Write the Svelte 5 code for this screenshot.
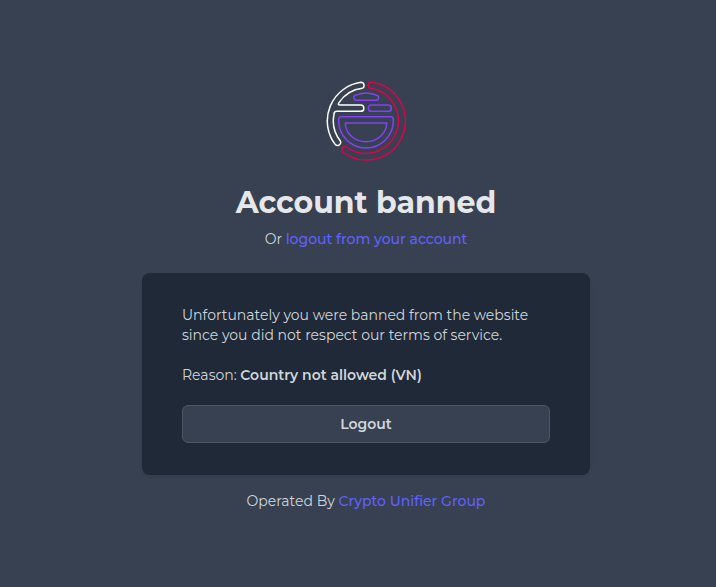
<script>
  const reason = 'Country not allowed (VN)';
</script>

<main>
  <header>
    <svg viewBox="0 0 240 240" role="img" aria-label="Crypto Unifier">
      <path class="white" d="M105 4A117 117 0 0 0 28 191A9.5 9.5 0 0 0 43 180A98 98 0 0 1 24 100Q24 91 32 91H104A9.5 9.5 0 0 0 104 72H42Q34 72 39 65A98 98 0 0 1 109 22A9.5 9.5 0 0 0 105 4Z" />
      <path class="red" d="M137 4A117 117 0 1 1 50 213A9.5 9.5 0 0 1 61 198A98 98 0 1 0 132 22A9.5 9.5 0 0 1 137 4Z" />
      <path class="purple" d="M91 58H151A8 8 0 0 0 155 44A84 84 0 0 0 86 44A8 8 0 0 0 91 58Z" />
      <rect class="purple" x="127" y="72" width="69" height="19" rx="9.5" />
      <path class="purple" d="M46 107H194Q202 107 202 115V119A82 82 0 0 1 38 119V115Q38 107 46 107Z" />
      <path class="purple" d="M58 126H182A62 56 0 0 1 58 126Z" />
    </svg>
    <h1>Account banned</h1>
    <p>Or <a href="#logout">logout from your account</a></p>
  </header>

  <section>
    <p>Unfortunately you were banned from the website since you did not respect our terms of service.</p>
    <p>Reason: <strong>{reason}</strong></p>
    <button type="button">Logout</button>
  </section>

  <footer>Operated By <a href="#group">Crypto Unifier Group</a></footer>
</main>

<style>
  :global(body) {
    background: #374151;
  }

  main {
    box-sizing: border-box;
    min-height: 100vh;
    padding: 81px 0 48px 16px;
    display: flex;
    flex-direction: column;
    align-items: center;
    color: #d1d5db;
    font-family: Montserrat, Inter, sans-serif;
    font-size: 14px;
    line-height: 20px;
  }

  header {
    display: flex;
    flex-direction: column;
    align-items: center;
    text-align: center;
  }

  svg {
    width: 80px;
    height: 80px;
    fill: none;
    stroke-width: 4.5;
    stroke-linejoin: round;
  }

  .white {
    stroke: #fff;
  }

  .red {
    stroke: #e0004d;
  }

  .purple {
    stroke: #8540f5;
  }

  h1 {
    margin: 24px 0 8px;
    color: #e5e7eb;
    font-size: 30px;
    font-weight: 700;
    line-height: 36px;
  }

  p {
    margin: 0;
  }

  a {
    color: #6260ff;
    font-weight: 500;
    text-decoration: none;
  }

  section {
    box-sizing: border-box;
    width: 100%;
    max-width: 448px;
    margin: 24px 0 16px;
    padding: 32px 40px;
    display: flex;
    flex-direction: column;
    gap: 20px;
    border-radius: 8px;
    background: #1f2937;
    box-shadow: 0 1px 3px #0000001a;
  }

  strong {
    font-weight: 600;
  }

  button {
    padding: 8px 16px;
    border: 1px solid #4b5563;
    border-radius: 6px;
    background: #374151;
    color: #d1d5db;
    font: inherit;
    font-weight: 600;
    cursor: pointer;
  }
</style>
